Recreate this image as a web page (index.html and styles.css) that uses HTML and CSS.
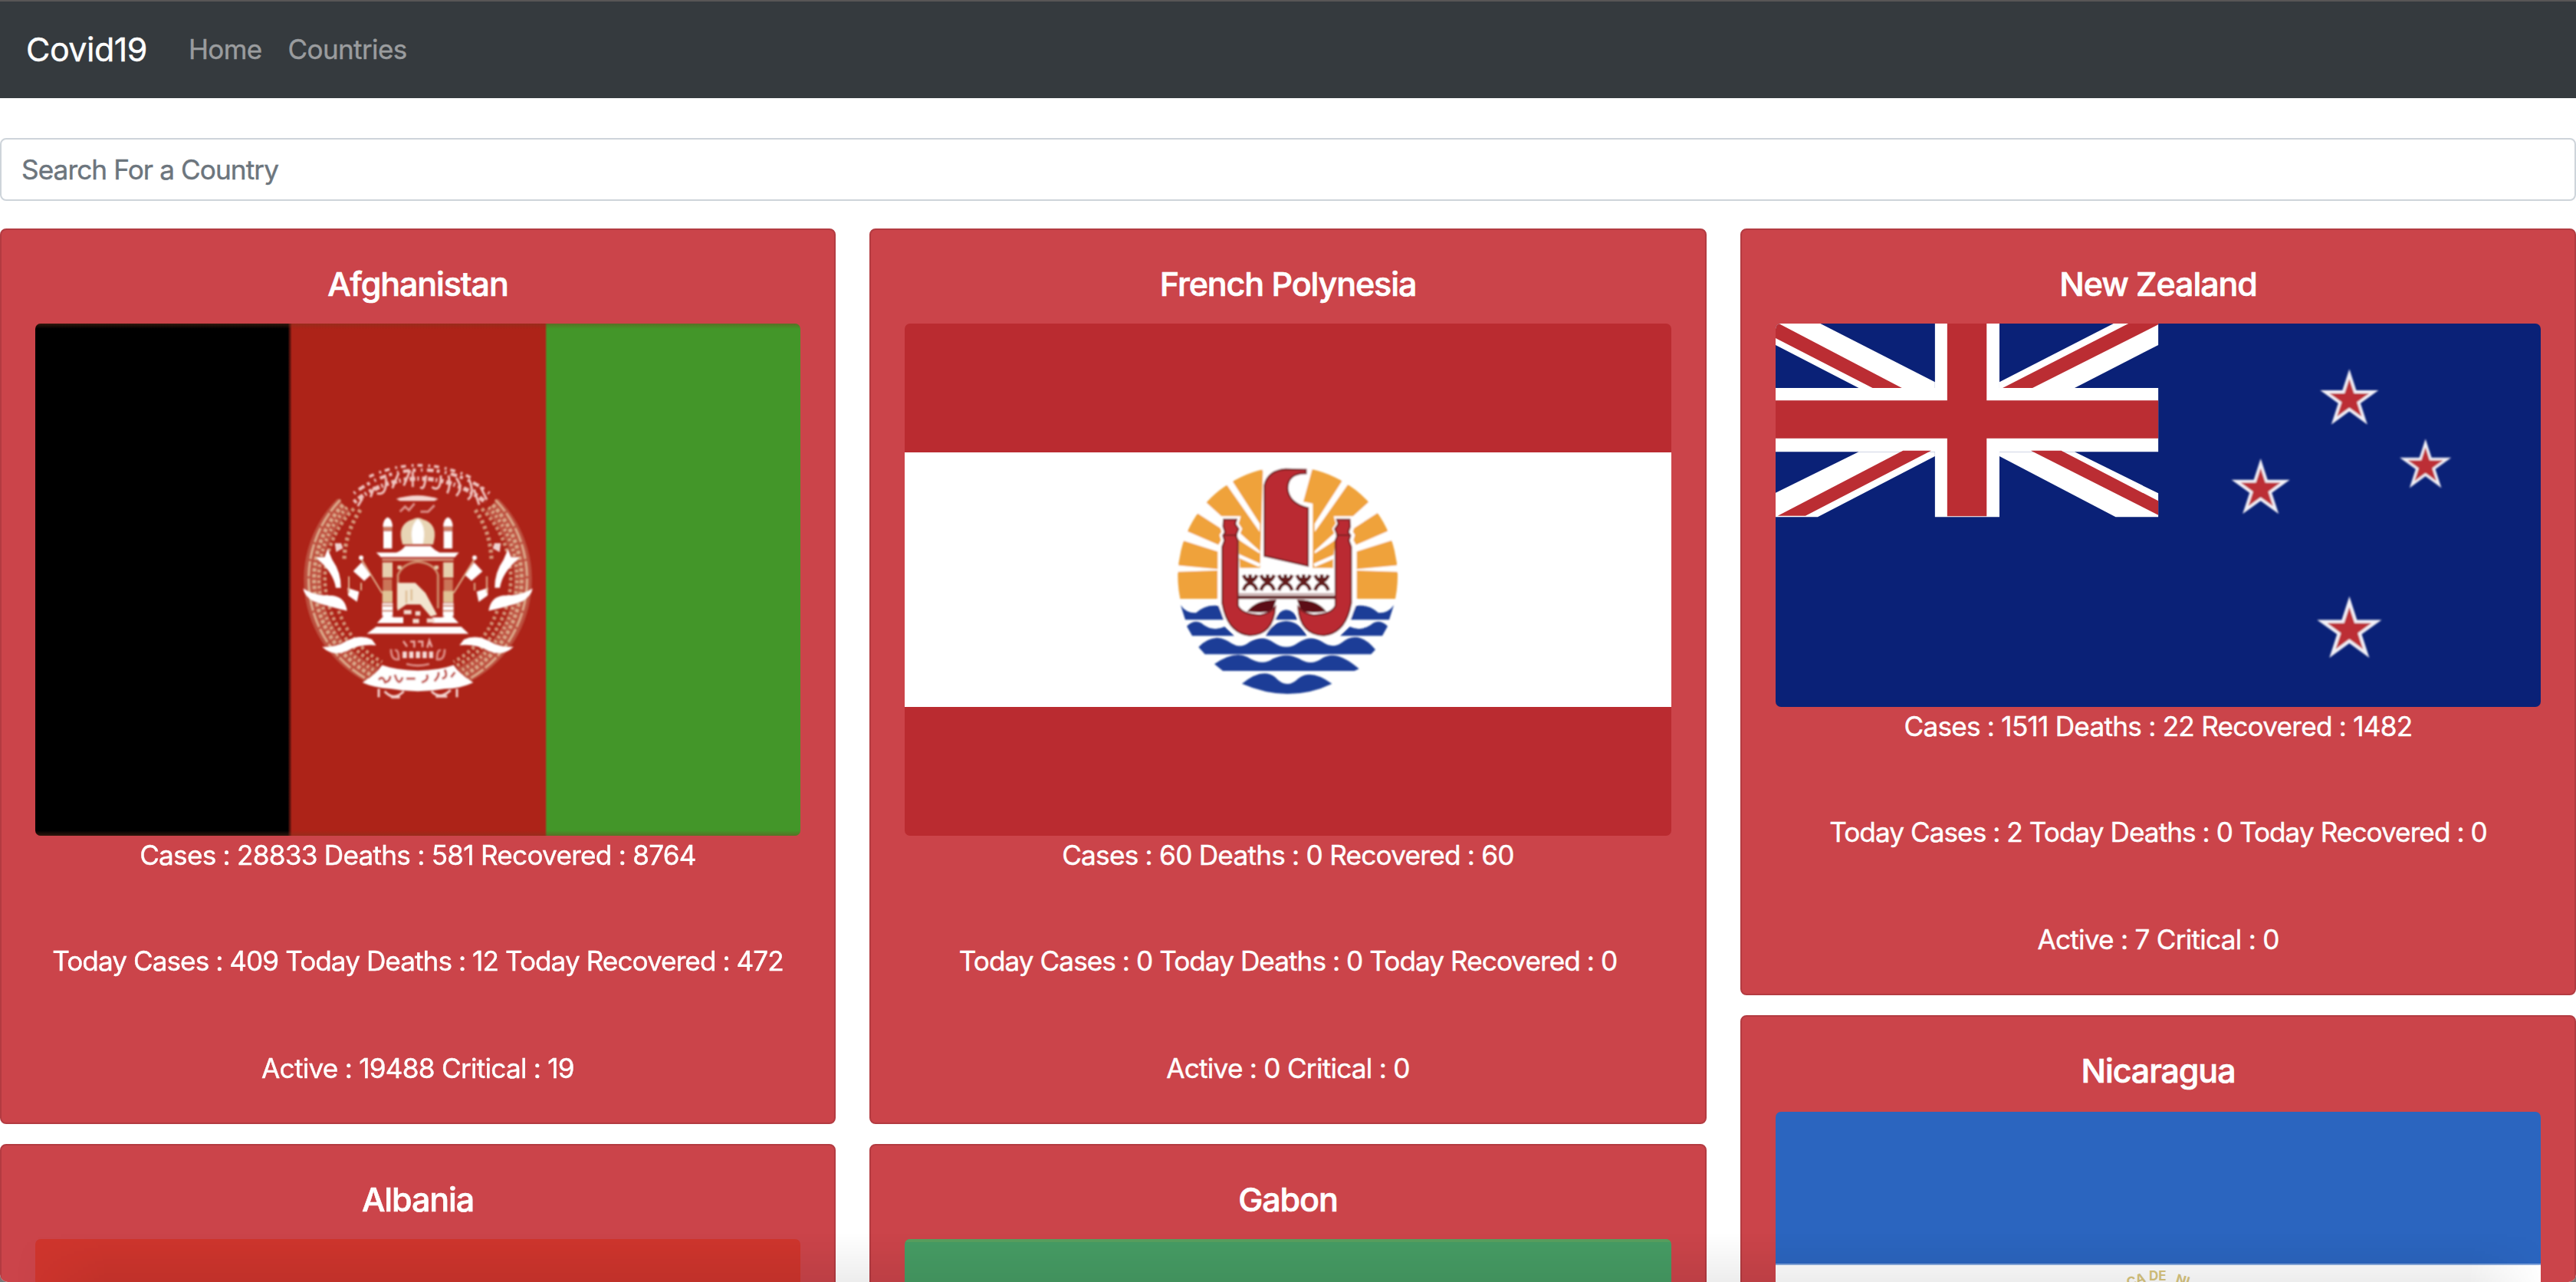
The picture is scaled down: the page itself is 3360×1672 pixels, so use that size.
FILE: index.html
```
<!DOCTYPE html>
<html lang="en">
<head>
<meta charset="utf-8">
<title>Covid19</title>
<link rel="stylesheet" href="styles.css">
</head>
<body>
<div class="page">
  <nav class="navbar">
    <a class="brand">Covid19</a>
    <a class="nav-link">Home</a>
    <a class="nav-link">Countries</a>
  </nav>

  <div class="search"><span class="search-text">Search For a Country</span></div>

  <main class="columns">
    <section class="column">
      <article class="card">
        <h5 class="title">Afghanistan</h5>
        <svg class="flag flag-tall" viewBox="0 0 998 668" preserveAspectRatio="none">
          <defs>
            <linearGradient id="v3" x1="0" y1="0" x2="1" y2="0">
              <stop offset=".3300" stop-color="#000"/><stop offset=".3355" stop-color="#ad2318"/>
              <stop offset=".6660" stop-color="#ad2318"/><stop offset=".6690" stop-color="#439629"/>
            </linearGradient>
            <linearGradient id="edge" x1="0" y1="0" x2="0" y2="1">
              <stop offset="0" stop-color="#7a3a20" stop-opacity=".4"/><stop offset=".01" stop-color="#7a3a20" stop-opacity="0"/>
              <stop offset=".99" stop-color="#7a3a20" stop-opacity="0"/><stop offset="1" stop-color="#7a3a20" stop-opacity=".4"/>
            </linearGradient>
            <filter id="soft"><feGaussianBlur stdDeviation="3"/></filter>
            <g id="half">
              <!-- wheat sheaves -->
              <g fill="none" stroke="#e6c7a4">
                <path d="M235 235 A415 415 0 0 0 355 905" stroke-width="70" opacity=".28"/>
                <path d="M222 215 A450 450 0 0 0 340 925" stroke-width="10" stroke-dasharray="60 8" opacity=".75"/>
                <path d="M232 235 A428 428 0 0 0 350 905" stroke-width="15" stroke-dasharray="14 9" opacity=".75"/>
                <path d="M248 245 A405 405 0 0 0 360 885" stroke-width="13" stroke-dasharray="9 12" opacity=".8"/>
                <path d="M275 250 A382 382 0 0 0 375 865" stroke-width="14" stroke-dasharray="13 10" opacity=".7"/>
                <path d="M300 255 A358 358 0 0 0 237 450" stroke-width="16" stroke-dasharray="12 12" opacity=".75"/>
                <path d="M215 650 A358 358 0 0 0 385 850" stroke-width="14" stroke-dasharray="12 12" opacity=".7"/>
              </g>
              <g fill="#fff">
                <path d="M130 440 L160 440 L172 408 L190 450 Q225 500 224 560 L204 560 Q195 500 130 445Z"/>
                <path d="M76 562 Q120 592 190 590 Q240 595 248 650 Q160 630 115 612 Q80 590 76 562Z"/>
                <path d="M150 790 Q205 795 245 768 Q300 740 345 762 L362 785 Q300 778 245 808 Q190 830 150 790Z"/>
                <path d="M200 385 L225 385 L232 405 L205 420Z" opacity=".8"/>
                <circle cx="303" cy="442" r="9"/>
                <path d="M272 495 L305 460 L340 510 L315 533Z"/>
                <path d="M250 560 L295 575 L287 615 L252 590Z"/>
              </g>
              <path d="M305 450 L385 580 M255 515 V580 M303 540 V570" stroke="#e0b591" stroke-width="6" fill="none"/>
              <!-- minaret -->
              <g fill="#fff">
                <path d="M388 320 Q390 290 407 284 Q424 290 426 320Z"/>
                <rect x="390" y="338" width="34" height="68"/>
                <rect x="385" y="620" width="42" height="50"/>
                <path d="M365 698 L400 660 L430 675 H468 V698Z"/>
              </g>
              <rect x="389" y="320" width="36" height="16" fill="#cf8168"/>
              <rect x="386" y="460" width="40" height="60" fill="#e6cfae"/>
              <rect x="388" y="526" width="36" height="46" fill="#cb7559"/>
              <rect x="386" y="572" width="40" height="46" fill="#e0c295"/>
              <path d="M386 630 H427 M386 650 H427" stroke="#cf8168" stroke-width="6"/>
            </g>
          </defs>
          <rect width="998" height="668" fill="url(#v3)"/>
          <g transform="translate(324 158) scale(.3333)" filter="url(#soft)">
            <use href="#half"/>
            <use href="#half" transform="translate(1050 0) scale(-1 1)"/>
            <!-- inscription band -->
            <g fill="none" stroke="#f0c5c0">
              <path d="M275 225 A405 405 0 0 1 790 225" stroke-width="17" stroke-dasharray="12 11 22 8 7 12"/>
              <path d="M275 190 A430 430 0 0 1 805 190" stroke-width="13" stroke-dasharray="7 17 26 12 12 20"/>
              <path d="M335 125 A450 450 0 0 1 735 130" stroke-width="11" stroke-dasharray="20 22 8 15"/>
              <path d="M290 240 l18 -30 M340 205 l14 -40 M365 190 q40 10 35 -60 M425 170 l25 -60 M470 160 l25 -60 M505 165 V105 M535 165 q15 20 22 -45 M580 165 q35 25 35 -45 M640 190 q15 -30 5 -70 M675 200 q30 -30 0 -70 M720 215 q30 -20 5 -80 M765 235 l-20 -60 M795 215 l-25 -50" stroke-width="9"/>
            </g>
            <path d="M440 212 Q525 185 605 212 L590 220 H455Z" fill="#f4d6d2"/>
            <path d="M455 262 l20 -20 l15 14 l22 -26 M535 262 h30 l25 -25" fill="none" stroke="#dd928b" stroke-width="9"/>
            <!-- mosque -->
            <path d="M465 390 Q440 310 505 292 Q525 280 545 292 Q608 310 585 390Z" fill="#e8d5b5"/>
            <path d="M505 388 Q490 320 525 290 Q560 320 545 388Z" fill="#fff"/>
            <path d="M362 422 H440 Q465 412 475 396 H575 Q590 412 610 422 H686 L670 440 H380Z" fill="#fff"/>
            <path d="M385 450 H665" stroke="#d79c80" stroke-width="8"/>
            <path d="M447 640 V510 Q465 465 525 458 Q590 465 604 510 V640" fill="none" stroke="#cf8c6c" stroke-width="9"/>
            <path d="M445 480 h16 M590 480 h16" stroke="#e6cfae" stroke-width="14"/>
            <path d="M445 650 V540 H515 L555 580 L600 665 L575 672 L535 625 L480 625Z" fill="#f2e4cf"/>
            <path d="M480 570 V620 M500 565 V610" stroke="#dcbc90" stroke-width="7"/>
            <path d="M470 655 H500 M515 660 H535 M505 690 H530 M560 688 H590" stroke="#f4ddd2" stroke-width="17"/>
            <path d="M325 740 L362 712 H695 L724 740Z" fill="#fff"/>
            <!-- date and lower script -->
            <path d="M468 768 l15 22 M495 770 h16 v24 M525 770 h18 v22 M562 794 l8 -28 l10 26" fill="none" stroke="#e8a9a2" stroke-width="8"/>
            <path d="M465 822 H585" stroke="#f6dcd8" stroke-width="26" stroke-dasharray="17 9"/>
            <path d="M420 800 q0 45 30 40 q0 -40 -15 -35 M630 800 q0 45 -30 40 q0 -40 15 -35 M480 858 q45 12 90 0" fill="none" stroke="#dd8c84" stroke-width="9"/>
            <path d="M385 862 Q440 882 525 884 Q610 882 665 862 Q690 900 742 930 Q690 955 630 955 Q525 975 420 955 Q350 950 308 930 Q360 900 385 862Z" fill="#fff"/>
            <path d="M372 920 q15 -20 25 10 q20 -5 20 -25 M435 900 q15 50 30 10 M480 915 h35 M540 930 q30 -10 20 -30 M590 925 q20 -20 15 -35 M620 915 q25 -5 10 -35 M655 910 l15 -20" fill="none" stroke="#c0504a" stroke-width="9"/>
            <path d="M372 955 V988 M395 965 q35 40 75 0 M578 965 q35 35 75 -5 M678 955 V988 M420 988 H455 M595 985 H640" fill="none" stroke="#f3d4d0" stroke-width="9"/>
          </g>
          <rect width="998" height="668" fill="url(#edge)"/>
        </svg>
        <div class="stats">
          <p class="total">Cases : 28833 Deaths : 581 Recovered : 8764</p>
          <p class="today">Today Cases : 409 Today Deaths : 12 Today Recovered : 472</p>
          <p class="active">Active : 19488 Critical : 19</p>
        </div>
      </article>
      <article class="card">
        <h5 class="title">Albania</h5>
        <svg class="flag flag-tall" viewBox="0 0 998 668" preserveAspectRatio="none">
          <rect width="998" height="668" fill="#cf352d"/>
        </svg>
      </article>
    </section>

    <section class="column">
      <article class="card">
        <h5 class="title">French Polynesia</h5>
        <svg class="flag flag-tall" viewBox="0 0 1000 668" preserveAspectRatio="none">
          <defs>
            <filter id="soft2"><feGaussianBlur stdDeviation="2.4"/></filter>
            <g id="side">
              <!-- gaps between the rays -->
              <path d="M60 440 L235 457 H330 V462 H235 L60 468Z M90 298 L400 432 V440 L90 342Z M150 160 L400 386 V396 L150 235Z M265 70 L400 280 V312 L262 115 L290 70Z" fill="#fff"/>
              <!-- clear margin round the outrigger hull -->
              <path d="M259 263 H308 L303 280 L316 300 L306 325 L314 345 L316 600 Q330 634 400 637 Q440 630 460 606 Q452 714 360 716 Q285 708 260 620 L248 590 V370 L262 345 L256 325 L264 312 L257 290Z" fill="#fff" stroke="#fff" stroke-width="26"/>
            </g>
            <g id="canoe">
              <path d="M350 623 Q385 575 465 577 L448 622 Q410 630 350 623Z" fill="#5c1013"/>
              <path d="M259 263 H308 L303 280 L316 300 L306 325 L314 345 V600 Q330 634 400 637 Q440 630 460 606 Q452 714 360 716 Q285 708 260 620 L253 590 V370 L262 345 L256 325 L264 312 L257 290Z" fill="#ba2b30" stroke="#7d2128" stroke-width="7"/>
              <path d="M260 324 H312" stroke="#7d2128" stroke-width="6"/>
            </g>
            <g id="seaside" fill="#1b3e97">
              <path d="M90 598 Q112 630 150 628 Q190 590 250 602 L262 655 H108Z"/>
              <path d="M114 680 Q148 648 180 675 Q220 702 262 682 L300 718 H135Z"/>
            </g>
            <path id="man" d="M-26 -30 Q-15 -5 0 -8 Q15 -5 26 -30 M-26 30 Q-18 5 0 2 Q18 5 26 30 M0 -32 V5 M-14 -14 H14" fill="none" stroke="#641a1d" stroke-width="14"/>
          </defs>
          <rect width="1000" height="668" fill="#ba2b30"/>
          <rect y="168" width="1000" height="332" fill="#fff"/>
          <g transform="translate(330 168) scale(.3333)" filter="url(#soft2)">
            <path d="M88 573 A430 430 0 1 1 930 573Z" fill="#efa23a"/>
            <path d="M400 40 H612 L570 193 L607 200 V460 H400 L412 75Z" fill="#fff"/>
            <path d="M235 456 H770 V580 H235Z" fill="#fff"/>
            <use href="#seaside"/>
            <use href="#seaside" transform="translate(1014 0) scale(-1 1)"/>
            <use href="#side"/>
            <use href="#side" transform="translate(1014 0) scale(-1 1)"/>
            <path d="M316 340 L400 410 V452 H322Z M698 340 L607 410 V452 H680Z" fill="#efa23a"/>
            <path d="M316 405 L400 442 M698 405 L612 442" stroke="#fff" stroke-width="14"/>
            <path d="M318 452 H690 V610 Q600 640 550 600 H460 Q410 640 318 610Z" fill="#fff"/>
            <use href="#canoe"/>
            <use href="#canoe" transform="translate(1010 0) scale(-1 1)"/>
            <path d="M316 567 H694" stroke="#641a1d" stroke-width="13"/>
            <path d="M318 554 H690" stroke="#b78f90" stroke-width="5"/>
            <use href="#man" x="362" y="510"/><use href="#man" x="430" y="510"/><use href="#man" x="500" y="510"/><use href="#man" x="571" y="510"/><use href="#man" x="642" y="510"/>
            <path d="M418 405 V130 Q430 72 500 66 L580 68 V82 Q510 80 508 140 Q512 200 588 218 V444Z" fill="#ba2b30" stroke="#7d2128" stroke-width="7"/>
            <g fill="#1b3e97">
              <path d="M460 655 Q475 618 503 616 Q535 618 547 655Z"/>
              <path d="M422 718 Q450 662 503 660 Q555 662 584 718Z"/>
              <path d="M160 762 Q190 728 232 725 Q265 728 290 748 Q325 770 360 742 Q410 712 455 745 Q505 778 550 745 Q600 712 645 742 Q685 770 720 745 Q785 690 852 772 L835 790 H185Z"/>
              <path d="M222 828 Q300 775 350 800 Q410 838 450 808 Q505 780 555 808 Q600 838 645 805 Q700 770 788 847 L770 855 H255Z"/>
              <path d="M330 905 Q410 840 460 880 Q505 930 550 885 Q600 845 682 905 Q600 945 508 945 Q420 944 330 905Z"/>
            </g>
          </g>
        </svg>
        <div class="stats">
          <p class="total">Cases : 60 Deaths : 0 Recovered : 60</p>
          <p class="today">Today Cases : 0 Today Deaths : 0 Today Recovered : 0</p>
          <p class="active">Active : 0 Critical : 0</p>
        </div>
      </article>
      <article class="card">
        <h5 class="title">Gabon</h5>
        <svg class="flag flag-tall" viewBox="0 0 1000 668" preserveAspectRatio="none">
          <rect width="1000" height="668" fill="#469c64"/>
          <rect width="1000" height="4" fill="#589f5f"/>
        </svg>
      </article>
    </section>

    <section class="column">
      <article class="card">
        <h5 class="title">New Zealand</h5>
        <svg class="flag flag-wide" viewBox="0 0 998 500" preserveAspectRatio="none">
          <defs>
            <path id="star" d="M0 -100 L22.5 -30.9 L95.1 -30.9 L36.3 11.8 L58.8 80.9 L0 38.2 L-58.8 80.9 L-36.3 11.8 L-95.1 -30.9 L-22.5 -30.9Z"/>
            <g id="nzstar"><use href="#star" fill="#f3f1f7"/><use href="#star" fill="#bc2d34" transform="scale(.68)"/></g>
            <filter id="soft3"><feGaussianBlur stdDeviation="3"/></filter>
          </defs>
          <rect width="998" height="500" fill="#0a2177"/>
          <g transform="scale(.69517 .33333) translate(-66 -426)">
            <g fill="#fff">
              <path d="M66 426 H150 L365 655 V678 H222 L66 510Z"/>
              <path d="M784 426 V510 L627 678 H486 V655 L700 426Z"/>
              <path d="M66 1183 V1088 L222 928 H365 V945 L145 1183Z"/>
              <path d="M784 1183 H704 L486 945 V928 H627 L784 1090Z"/>
              <path d="M365 426 H486 V1183 H365Z M66 678 H784 V928 H66Z"/>
            </g>
            <g fill="#bb2d33">
              <path d="M66 426 H72 L303 678 H248 L66 483Z"/>
              <path d="M784 426 H728 L492 678 H548 L784 430Z"/>
              <path d="M70 1178 H122 L358 923 H305Z"/>
              <path d="M784 1175 V1120 L602 923 H545Z"/>
              <path d="M388 426 H462 V1180 H388Z M66 727 H784 V875 H66Z"/>
            </g>
          </g>
          <g transform="translate(564 38) scale(.3333)" filter="url(#soft3)">
            <use href="#nzstar" transform="translate(553 184) scale(1.2)"/>
            <use href="#nzstar" transform="translate(206 534) scale(1.2)"/>
            <use href="#nzstar" transform="translate(851 443) scale(1.06)"/>
            <use href="#nzstar" transform="translate(553 1086) scale(1.33)"/>
          </g>
        </svg>
        <div class="stats">
          <p class="total">Cases : 1511 Deaths : 22 Recovered : 1482</p>
          <p class="today">Today Cases : 2 Today Deaths : 0 Today Recovered : 0</p>
          <p class="active">Active : 7 Critical : 0</p>
        </div>
      </article>
      <article class="card card-late">
        <h5 class="title">Nicaragua</h5>
        <svg class="flag flag-mid" viewBox="0 0 998 598" preserveAspectRatio="none">
          <rect width="998" height="598" fill="#2b65bf"/>
          <rect y="198" width="998" height="3" fill="#86a8dc"/>
          <rect y="200" width="998" height="199" fill="#fff"/>
          <g class="motto">
            <text x="487" y="220">DE</text>
            <text transform="translate(460 229) rotate(-18)">CA</text>
            <text transform="translate(521 223) rotate(16)">NI</text>
          </g>
        </svg>
      </article>
    </section>
  </main>
  <div class="shade"></div>
</div>
</body>
</html>
```
FILE: styles.css
```
* { box-sizing: border-box; }
html { background: #777; }
body {
  margin: 0;
  font: 35.2px/52px Inter, "Liberation Sans", sans-serif;
  -webkit-text-stroke: .4px;
}
.page {
  position: relative;
  height: 1672px;
  overflow: hidden;
  background: #fff;
  border-radius: 0 0 10px 10px;
}
.navbar {
  display: flex;
  align-items: center;
  height: 128px;
  padding: 0 34px 2px;
  background: #353a3e;
  border-top: 2px solid #585556;
  color: #9a9c9e;
}
.brand {
  margin-right: 54px;
  font-size: 43px;
  color: #fff;
  letter-spacing: -.5px;
}
.nav-link {
  margin-right: 34px;
  font-size: 35px;
  letter-spacing: -.6px;
}
.search {
  display: flex;
  align-items: center;
  height: 82px;
  margin-top: 52px;
  padding: 0 26px;
  border: 2px solid #ced4da;
  border-radius: 8px;
}
.search-text {
  color: #6c757d;
  letter-spacing: -.92px;
}
.columns {
  display: grid;
  grid-template-columns: 1090fr 1092fr 1090fr;
  column-gap: 44px;
  margin-top: 36px;
}
.column {
  display: flex;
  flex-direction: column;
  gap: 26px;
}
.card {
  padding: 44px;
  background: #cb444a;
  border: 2px solid #b33b41;
  border-radius: 8px;
  color: #fff;
  text-align: center;
}
.title {
  margin: 0 0 26px;
  font-size: 43px;
  font-weight: 500;
  line-height: 52px;
  letter-spacing: -1.1px;
  -webkit-text-stroke: .7px;
}
.card-late .title { margin-bottom: 28px; }
.flag {
  display: block;
  width: 100%;
  border-radius: 7px;
}
.flag-tall { height: 668px; }
.flag-wide { height: 500px; }
.flag-mid { height: 598px; }
.stats {
  display: flex;
  flex-direction: column;
  margin: -1px 0 1px;
  white-space: nowrap;
}
.stats p { margin: 0; }
.total { letter-spacing: -.77px; }
.stats .today {
  margin: 86px 0 88px;
  letter-spacing: -.96px;
}
.active { letter-spacing: -.76px; }
.motto {
  fill: #d9c67f;
  font-size: 17px;
  font-weight: 700;
}
.shade {
  position: absolute;
  left: 0;
  right: 0;
  bottom: 0;
  height: 64px;
  background: linear-gradient(rgba(0,0,0,0), rgba(0,0,0,.07));
  -webkit-mask-image: linear-gradient(90deg, transparent 20px, #000 140px, #000 3220px, transparent 3320px);
  mask-image: linear-gradient(90deg, transparent 20px, #000 140px, #000 3220px, transparent 3320px);
}
```
